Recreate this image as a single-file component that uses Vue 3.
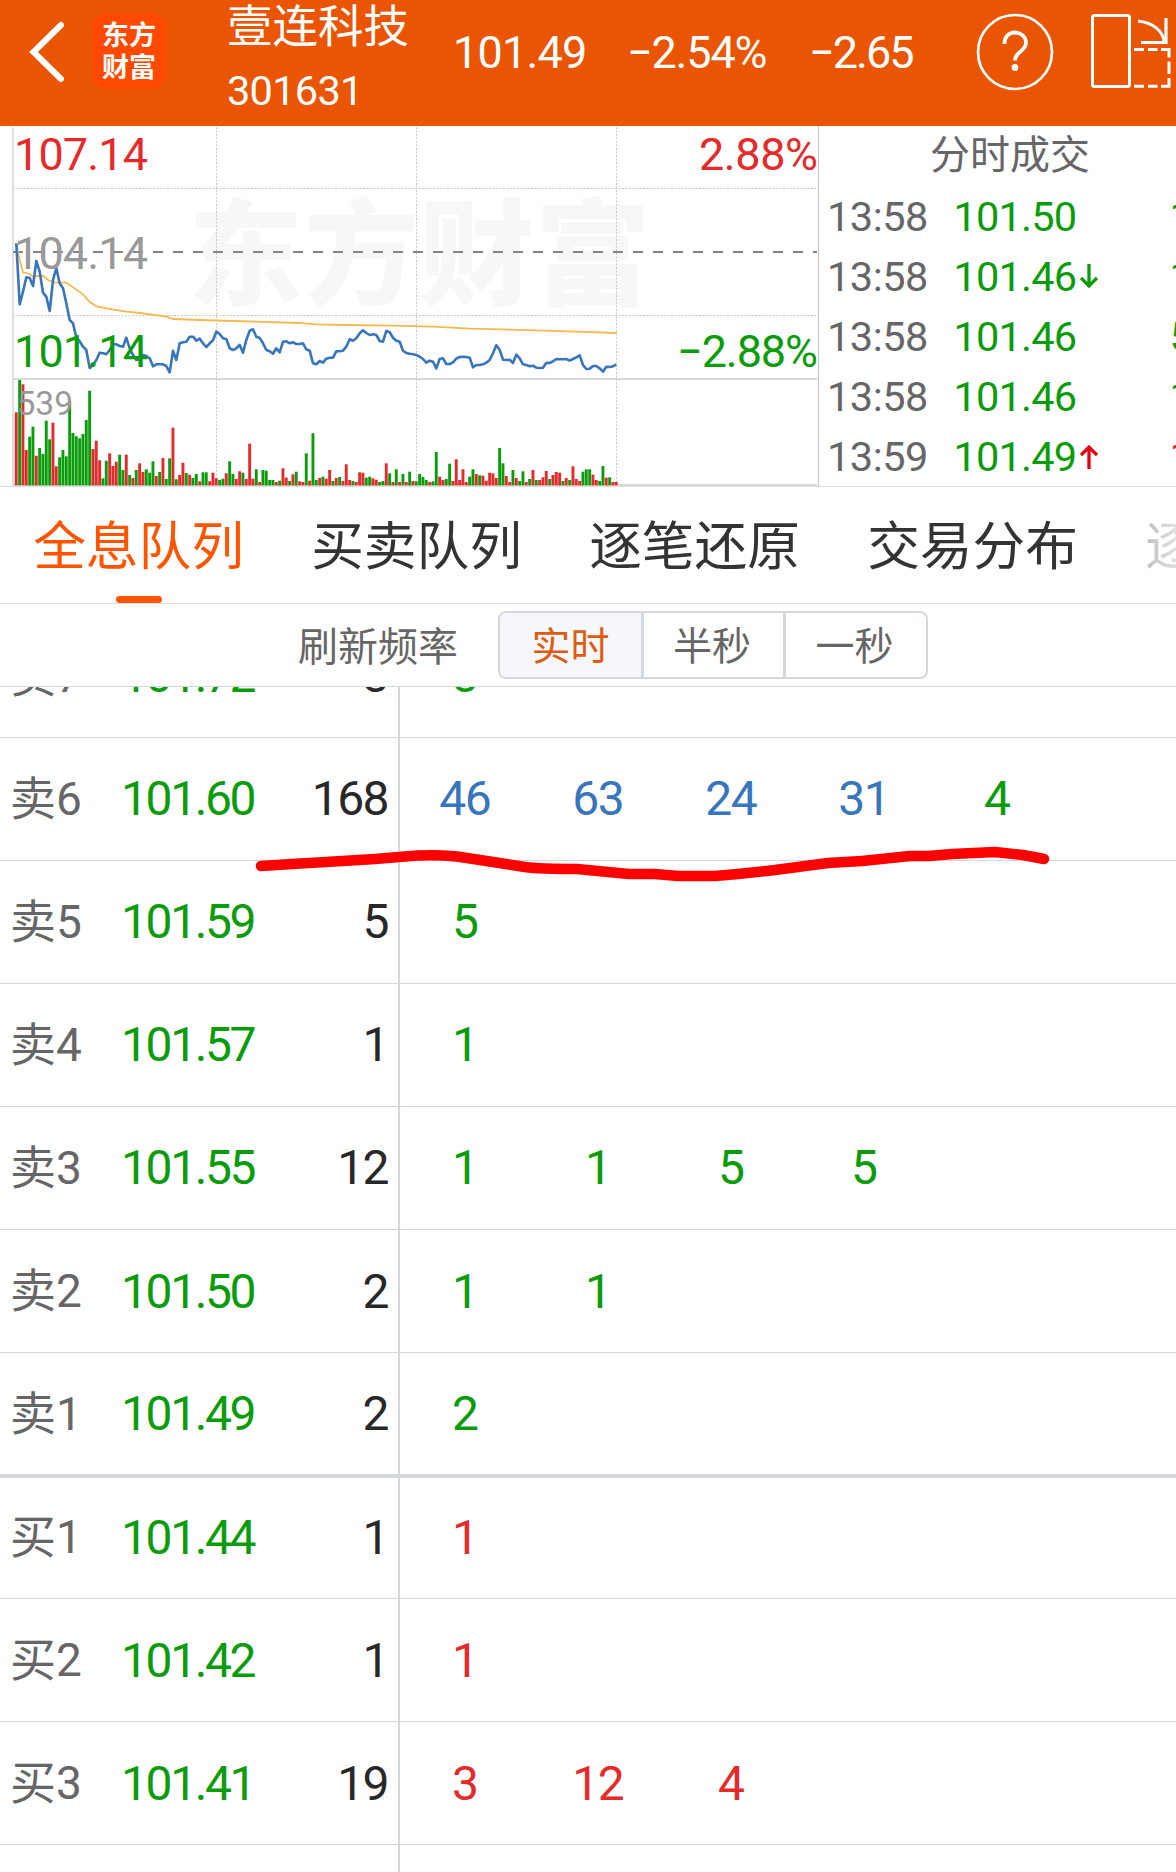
<template>
  <div class="page">
    <header class="header">
      <svg class="back" width="40" height="64" viewBox="0 0 40 64" fill="none" stroke="currentColor" stroke-width="6" stroke-linecap="round" stroke-linejoin="miter"><path d="M34 5L6.500 32L34 59"></path></svg>
      <div class="logo">
        <span>东方</span>
        <span>财富</span>
      </div>
      <div class="stock">
        <span class="stock-name">{{ stock.name }}</span>
        <span class="stock-code">{{ stock.code }}</span>
      </div>
      <div class="quote">
        <span class="quote-price">{{ stock.price }}</span>
        <span class="quote-percent">{{ stock.percent }}</span>
        <span>{{ stock.change }}</span>
      </div>
      <svg class="help" width="78" height="78" viewBox="0 0 78 78" fill="none" stroke="currentColor" stroke-width="2.700">
        <circle cx="39" cy="39" r="37"></circle>
        <path d="M28.500 31C28.500 23.500 33 19.500 39 19.500C45 19.500 50 23.500 50 30C50 38 39 38.500 39 47.500" stroke-width="3.800"></path>
        <circle cx="39" cy="54.500" r="3.400" fill="currentColor" stroke="none"></circle>
      </svg>
      <svg class="rotate" width="82" height="76" viewBox="0 0 82 76" fill="none" stroke="currentColor" stroke-width="3">
        <rect x="1.500" y="2.500" width="37" height="71" rx="2"></rect>
        <path d="M47 8C61 9.500 72 17 73.500 30"></path>
        <path d="M75 5V29.500H50" stroke-width="3.200"></path>
        <path d="M43 36.500H53M57 36.500H66.500M70 36.500H78V44.500M78 48.500V61M78 65V73.200H70M66.500 73.200H57M53 73.200H43"></path>
      </svg>
    </header>

    <section class="market">
      <svg class="chart" width="818" height="360" viewBox="0 0 818 360">
        <text class="watermark" x="188" y="170" textLength="462">东方财富</text>
        <g class="grid">
          <path d="M13 62.500H817M13 189.500H817M216.500 1V359M416.500 1V359M616.500 1V359"></path>
        </g>
        <path d="M13 1V360" stroke="#e0e0e0" stroke-width="2"></path>
        <path d="M13 253H817M13 359H817" stroke="#d8d8d8" stroke-width="2"></path>
        <path d="M13 126H817" stroke="#858585" stroke-width="2" stroke-dasharray="10 10"></path>
        <rect v-for="(b, i) in bars" :key="i" :x="b.x" :y="b.y" width="2.900" :height="b.h" :fill="b.color"></rect>
        <polyline :points="avgPoints" fill="none" stroke="#f3b94f" stroke-width="1.800"></polyline>
        <polyline :points="pricePoints" fill="none" stroke="#3775bc" stroke-width="2.600" stroke-linejoin="round"></polyline>
        <text x="14" y="44" class="up" textLength="134">107.14</text>
        <text x="14" y="142.500" class="flat" textLength="134">104.14</text>
        <text x="14" y="241" class="down" textLength="134">101.14</text>
        <text x="699" y="44" class="up" textLength="119">2.88%</text>
        <text x="677" y="241" class="down" textLength="141">−2.88%</text>
        <text x="16.500" y="289" class="flat small">539</text>
      </svg>
      <div class="deals">
        <div class="deals-title">分时成交</div>
        <div v-for="(d, i) in deals" :key="i" class="deal">
          <span class="deal-time">{{ d.time }}</span>
          <span class="deal-price down">{{ d.price }}</span>
          <span class="deal-arrow">
            <svg v-if="d.dir" :class="d.dir" width="18" height="26" viewBox="0 0 18 26" fill="none" stroke="currentColor" stroke-width="3.300">
              <path v-if="d.dir === 'down'" class="line" d="M9 1V23M1 15L9 23L17 15"></path>
              <path v-else class="line" d="M9 25V3M1 11L9 3L17 11"></path>
            </svg>
          </span>
          <span :class="d.dir === 'rise' ? 'up' : 'down'">{{ d.vol }}</span>
        </div>
      </div>
    </section>

    <nav class="tabs">
      <button v-for="t in tabs" :key="t" class="tab" :class="{ active: t === activeTab }" @click="activeTab = t">{{ t }}</button>
    </nav>

    <div class="refresh">
      <span class="refresh-label">刷新频率</span>
      <div class="segment">
        <button v-for="r in rates" :key="r" :class="{ active: r === rate }" @click="rate = r">{{ r }}</button>
      </div>
    </div>

    <section class="book">
      <div class="rows">
        <div v-for="row in rows" :key="row.label" class="row" :class="{ last: row.label === '卖1' }">
          <span class="label">{{ row.label }}</span>
          <span class="price down">{{ row.price }}</span>
          <span class="total">{{ row.total }}</span>
          <div class="orders">
            <span v-for="(o, i) in row.orders" :key="i" :class="orderClass(row, o)">{{ o }}</span>
          </div>
        </div>
        <div class="rest"></div>
      </div>
      <svg class="mark" width="800" height="40" viewBox="250 845 800 40" fill="none">
        <path d="M261 866L292 864L326 862L375 859L405 856.500Q431 854 457 856.500L480 860L525 867Q540 869 577 869L629 874H655L678 876H715L738 874L775 870L828 863L862 861L910 856H929L952 854L995 852L1023 855L1044 859" stroke="#ff0000" stroke-width="10.500" stroke-linecap="round" stroke-linejoin="round"></path>
      </svg>
    </section>
  </div>
</template>

<script setup>
import { ref } from 'vue'

const stock = { name: '壹连科技', code: '301631', price: '101.49', percent: '−2.54%', change: '−2.65' }

const deals = [
  { time: '13:58', price: '101.50', vol: 1 },
  { time: '13:58', price: '101.46', vol: 1, dir: 'down' },
  { time: '13:58', price: '101.46', vol: 5 },
  { time: '13:58', price: '101.46', vol: 1 },
  { time: '13:59', price: '101.49', vol: 1, dir: 'rise' },
]

const tabs = ['全息队列', '买卖队列', '逐笔还原', '交易分布', '逐笔委托']
const activeTab = ref('全息队列')

const rates = ['实时', '半秒', '一秒']
const rate = ref('实时')

const rows = [
  { label: '卖7', price: '101.72', total: 3, orders: [3] },
  { label: '卖6', price: '101.60', total: 168, orders: [46, 63, 24, 31, 4] },
  { label: '卖5', price: '101.59', total: 5, orders: [5] },
  { label: '卖4', price: '101.57', total: 1, orders: [1] },
  { label: '卖3', price: '101.55', total: 12, orders: [1, 1, 5, 5] },
  { label: '卖2', price: '101.50', total: 2, orders: [1, 1] },
  { label: '卖1', price: '101.49', total: 2, orders: [2] },
  { label: '买1', price: '101.44', total: 1, orders: [1] },
  { label: '买2', price: '101.42', total: 1, orders: [1] },
  { label: '买3', price: '101.41', total: 19, orders: [3, 12, 4] },
]

// orders of 20 lots and more are highlighted
const orderClass = (row, n) => {
  if (n >= 20) return 'big'
  return row.label.startsWith('买') ? 'up' : 'down'
}

// one value per minute, in thirds of a pixel from the top
const prices = [
  370, 553, 515, 472, 474, 498, 423, 455, 518, 530, 573, 480, 445, 490, 505, 550, 600, 610, 652, 664,
  680, 690, 744, 735, 720, 698, 700, 703, 690, 673, 673, 678, 680, 653, 685, 705, 720, 718, 705, 708,
  715, 739, 733, 733, 733, 738, 757, 692, 720, 670, 667, 665, 650, 650, 662, 656, 670, 681, 670, 661,
  635, 642, 655, 657, 685, 690, 685, 675, 698, 660, 632, 628, 650, 654, 670, 690, 694, 701, 685, 697,
  665, 664, 670, 667, 672, 672, 670, 688, 692, 730, 733, 723, 728, 716, 713, 713, 694, 694, 692, 680,
  658, 662, 655, 640, 631, 639, 645, 643, 645, 663, 665, 633, 637, 653, 662, 665, 692, 699, 701, 703,
  705, 710, 717, 728, 722, 725, 745, 717, 715, 732, 732, 727, 716, 711, 710, 711, 713, 742, 735, 735,
  733, 728, 720, 700, 676, 690, 719, 720, 719, 729, 704, 715, 733, 735, 739, 737, 743, 744, 743, 728,
  729, 724, 717, 718, 718, 717, 722, 717, 712, 706, 735, 747, 746, 738, 738, 745, 755, 740, 741, 739, 733,
]

const averages = [
  [49, 372], [59, 420], [69, 457], [89, 462], [99, 470], [109, 468], [129, 468], [145, 480], [160, 487],
  [199, 488], [209, 495], [249, 523], [270, 547], [290, 559], [340, 569], [380, 575], [420, 579], [500, 590],
  [520, 597], [600, 600], [700, 603], [800, 606], [900, 609], [950, 613], [1030, 615], [1180, 617],
  [1300, 620], [1410, 626], [1530, 629], [1730, 635], [1850, 639],
]

const volumes = `r877 g780 r793 r990 g950 g920 r1007 g984 g1002 g902 g958 r908 r1039 g1012 g990 g1009 g842 g939 g949 g955
g942 g900 g812 r987 r962 r1021 g1075 g1022 r1000 r1038 r1025 g1004 g1050 r1004 g1065 r1074 g1050 r1030 r1056 g1048
g1058 g1024 r1068 g1056 r1014 g1077 g1015 r923 g1078 r1065 r1028 g1059 r1064 g1074 g1062 r1084 g1057 g1057 r1084 r1058
r1075 g1080 g1076 r1060 g1024 g1062 r1077 r1054 g1058 r1077 r971 r1076 g1048 r1086 g1050 g1052 g1080 g1080 r1086 g1082
r1045 r1073 g1083 r1063 g1055 r1084 r1086 g1000 r1082 g940 g1080 r1074 g1070 r1076 r1050 g1083 r1074 g1071 r1083 r1033
r1080 g1083 r1086 r1057 r1058 g1073 g1070 r1075 r1079 g1086 g1083 r1030 g1060 r1086 g1048 r1086 g1062 r1086 g1055 r1083
g1084 g1062 g1071 g1080 r1086 g1084 g996 r1070 r1080 g1077 g1031 r1083 r1018 r1080 r1048 r1086 g1070 g1048 r1062 g1066
r1067 r1082 r1058 r1060 r1074 g984 g1030 r1068 r1086 g1050 r1074 g1083 g1054 r1086 g1077 r1050 g1080 r1080 r1072 r1053
g1077 r1065 r1056 r1058 g1083 r1074 g1080 r1039 r1077 r1083 g1055 g1048 g1048 r1064 r1080 g1083 g1038 r1073 g1072 r1086 r1086`

const toX = (v) => (v / 3).toFixed(1)
const toY = (v) => (v / 3 - 6).toFixed(1)

const pricePoints = prices.map((p, i) => `${toX(49 + i * 10)},${toY(p)}`).join(' ')
const avgPoints = averages.map(([x, y]) => `${toX(x)},${toY(y)}`).join(' ')
const bars = volumes.split(/\s+/).map((v, i) => {
  const top = Number(v.slice(1))
  return {
    x: toX(44.5 + i * 10),
    y: toY(top),
    h: ((1096 - top) / 3).toFixed(1),
    color: v[0] === 'r' ? '#e62a2a' : '#0a9c0a',
  }
})
</script>

<style>
body {
  margin: 0;
  background: #fff;
}
</style>

<style scoped>
.page {
  width: 1176px;
  height: 1872px;
  overflow: hidden;
  display: flex;
  flex-direction: column;
  background: #fff;
  font-family: Roboto, "Noto Sans CJK SC", sans-serif;
  color: #282828;
}

button {
  border: none;
  background: transparent;
  padding: 0;
  font-family: inherit;
  cursor: pointer;
}

.up {
  color: #e62a2a;
  fill: #e62a2a;
}

.down {
  color: #0a9c0a;
  fill: #0a9c0a;
}

.rise {
  color: #e60012;
}

.line {
  fill: none;
}

.big {
  color: #3775bc;
}

.header {
  height: 126px;
  flex-shrink: 0;
  display: flex;
  align-items: flex-start;
  background: #ea5504;
  color: #fff;
}

.back {
  margin: 20px 0 0 27px;
}

.logo {
  width: 74px;
  height: 75px;
  margin: 14px 0 0 25px;
  border-radius: 14px;
  background: #ff4800;
  display: flex;
  flex-direction: column;
  align-items: center;
  justify-content: center;
  font-size: 27px;
  font-weight: 700;
  line-height: 32px;
}

.stock {
  width: 226px;
  margin-left: 61px;
  padding-top: 2px;
  display: flex;
  flex-direction: column;
  white-space: nowrap;
}

.stock-name {
  font-size: 45.500px;
  line-height: 52px;
}

.stock-code {
  margin-top: 7px;
  font-size: 41.500px;
  line-height: 60px;
  letter-spacing: -0.7px;
}

.quote {
  width: 523px;
  display: flex;
  font-size: 45px;
  line-height: 106px;
  letter-spacing: -2px;
  white-space: nowrap;
}

.quote-price {
  width: 174px;
  letter-spacing: -0.8px;
}

.quote-percent {
  width: 182px;
  letter-spacing: -1.2px;
}

.help {
  margin-top: 12.500px;
}

.rotate {
  margin: 13px 0 0 37px;
}

.market {
  height: 360px;
  flex-shrink: 0;
  display: flex;
  border-bottom: 1px solid #dedede;
}

.chart {
  flex-shrink: 0;
  font-size: 45px;
}

.grid {
  stroke: #c8c8c8;
  stroke-width: 1;
  stroke-dasharray: 2 1.500;
}

.watermark {
  font-size: 115px;
  font-weight: 900;
  fill: #f7f7f7;
}

.flat {
  fill: #999;
}

.small {
  font-size: 33.500px;
}

.deals {
  flex: 1;
  min-width: 0;
  overflow: hidden;
  border-left: 1px solid #c4c4c4;
  font-size: 41.500px;
  color: #666;
}

.deals-title {
  width: 382px;
  height: 60px;
  line-height: 59px;
  font-size: 40px;
  text-align: center;
}

.deal {
  height: 60.200px;
  padding-left: 8px;
  display: flex;
  align-items: center;
  white-space: nowrap;
}

.deal-time {
  flex-shrink: 0;
  width: 126.500px;
  letter-spacing: -0.5px;
}

.deal-price {
  flex-shrink: 0;
  width: 126px;
  letter-spacing: -0.8px;
}

.deal-arrow {
  flex-shrink: 0;
  width: 90px;
  display: flex;
}

.tabs {
  position: relative;
  height: 116px;
  flex-shrink: 0;
  display: flex;
  gap: 67px;
  padding-left: 33px;
  overflow: hidden;
  border-bottom: 1px solid #dfe0e2;
}

.tabs::after {
  content: "";
  position: absolute;
  top: 0;
  right: 0;
  width: 46px;
  height: 100%;
  background: linear-gradient(90deg, rgba(255, 255, 255, 0.6), rgba(255, 255, 255, 0.85));
}

.tab {
  position: relative;
  flex-shrink: 0;
  width: 211px;
  font-size: 52.700px;
  line-height: 120px;
  white-space: nowrap;
  color: #333;
}

.tab.active {
  color: #ff5500;
}

.tab.active::after {
  content: "";
  position: absolute;
  left: 83px;
  bottom: 0;
  width: 46px;
  height: 7px;
  border-radius: 3.500px;
  background: #ff5500;
}

.refresh {
  height: 82px;
  flex-shrink: 0;
  display: flex;
  align-items: center;
  border-bottom: 1px solid #d4d7dc;
  font-size: 40px;
  color: #666;
}

.refresh-label {
  width: 200px;
  margin-left: 298px;
  padding-bottom: 3px;
}

.segment {
  width: 426px;
  height: 64px;
  display: grid;
  grid-template-columns: 141px 142px 1fr;
  border: 2px solid #d4d8de;
  border-radius: 8px;
  overflow: hidden;
}

.segment button {
  padding-bottom: 4px;
  font-size: 39px;
  color: #666;
}

.segment button + button {
  padding-right: 3px;
  border-left: 3px solid #d4d8de;
}

.segment button.active {
  background: #f6f7fa;
  color: #e05a10;
}

.book {
  position: relative;
  flex: 1;
  min-height: 0;
  overflow: hidden;
}

.rows {
  margin-top: -72.500px;
}

.row {
  box-sizing: border-box;
  height: 123.100px;
  display: flex;
  align-items: center;
  border-bottom: 1.500px solid #d4d6dc;
  font-size: 48px;
  letter-spacing: -1.6px;
}

.row.last {
  height: 125px;
  border-bottom: 4px solid #d4d7dc;
}

.row.last + .row {
  height: 121.200px;
}

.row.last + .row > span,
.row.last + .row .orders span {
  padding-bottom: 2px;
}

.row > .label {
  width: 111px;
  padding-left: 10px;
  padding-bottom: 8px;
  font-size: 46px;
  letter-spacing: 0;
  color: #666;
}

.row.last + .row > .label {
  padding-bottom: 10px;
}

.price {
  width: 150px;
  letter-spacing: -2.4px;
}

.total {
  width: 118px;
  padding-right: 10px;
  margin-left: -1px;
  text-align: right;
}

.orders {
  flex: 1;
  align-self: stretch;
  display: flex;
  align-items: center;
  border-left: 2px solid #d4d7de;
}

.orders span {
  width: 133px;
  text-align: center;
  text-indent: -3.500px;
}

.rest {
  height: 123px;
  margin-left: 398px;
  border-left: 2px solid #d4d7de;
}

.mark {
  position: absolute;
  left: 250px;
  top: 158px;
}
</style>
